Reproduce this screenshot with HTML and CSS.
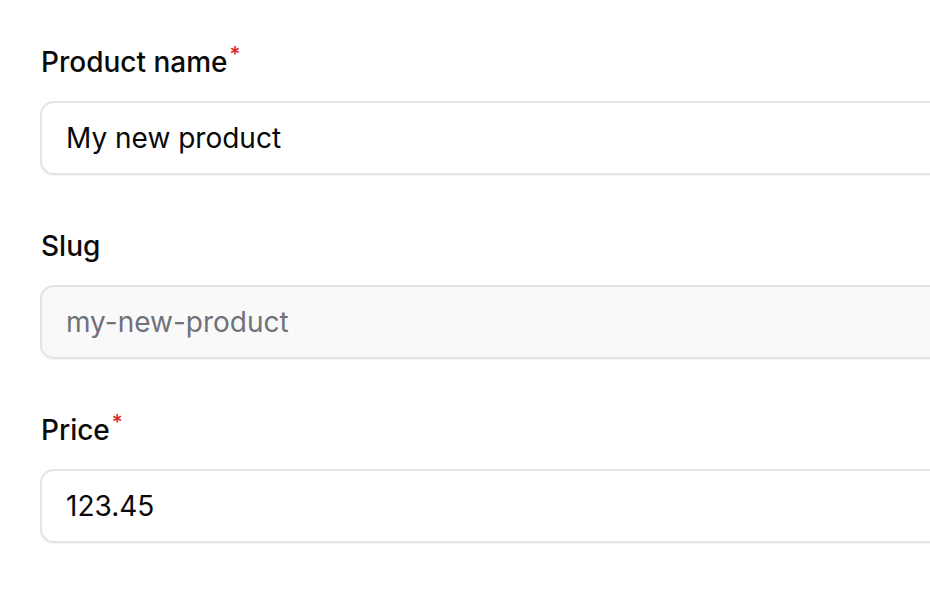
FILE: index.html
```html
<!DOCTYPE html>
<html lang="en">
<head>
<meta charset="utf-8">
<title>Product form</title>
<link rel="stylesheet" href="styles.css">
</head>
<body>
<form class="form">
  <div class="field">
    <label class="label" for="name">Product name<span class="req">*</span></label>
    <div class="input">My new product</div>
  </div>
  <div class="field">
    <label class="label" for="slug">Slug</label>
    <div class="input input-disabled">my-new-product</div>
  </div>
  <div class="field">
    <label class="label" for="price">Price<span class="req">*</span></label>
    <div class="input">123.45</div>
  </div>
</form>
</body>
</html>
```

FILE: styles.css
```css
html, body {
  margin: 0;
  padding: 0;
  background: #ffffff;
}
body {
  font-family: Inter, "Noto Sans", sans-serif;
  color: #09090b;
}
.form {
  box-sizing: border-box;
  width: 930px;
  height: 602px;
  overflow: hidden;
  padding: 42px 0 0 40px;
  display: flex;
  flex-direction: column;
  gap: 51px;
}
.field {
  display: flex;
  flex-direction: column;
  gap: 19px;
}
.label {
  display: block;
  font-size: 28px;
  line-height: 40px;
  font-weight: 500;
  padding-left: 1px;
  color: #0a0a0a;
}
.req {
  color: #dc2626;
  font-size: 21px;
  line-height: 1;
  vertical-align: top;
  position: relative;
  top: 2px;
  margin-left: 2px;
}
.input {
  box-sizing: border-box;
  height: 74px;
  margin-right: -40px;
  border: 2px solid #e4e4e7;
  border-radius: 14px;
  padding: 0 24px;
  display: flex;
  align-items: center;
  font-size: 28px;
  font-weight: 400;
  color: #09090b;
  background: #ffffff;
  box-shadow: 0 1px 2px rgba(0, 0, 0, 0.05);
}
.input-disabled {
  background: #f9f9f9;
  color: #71717a;
}
```
